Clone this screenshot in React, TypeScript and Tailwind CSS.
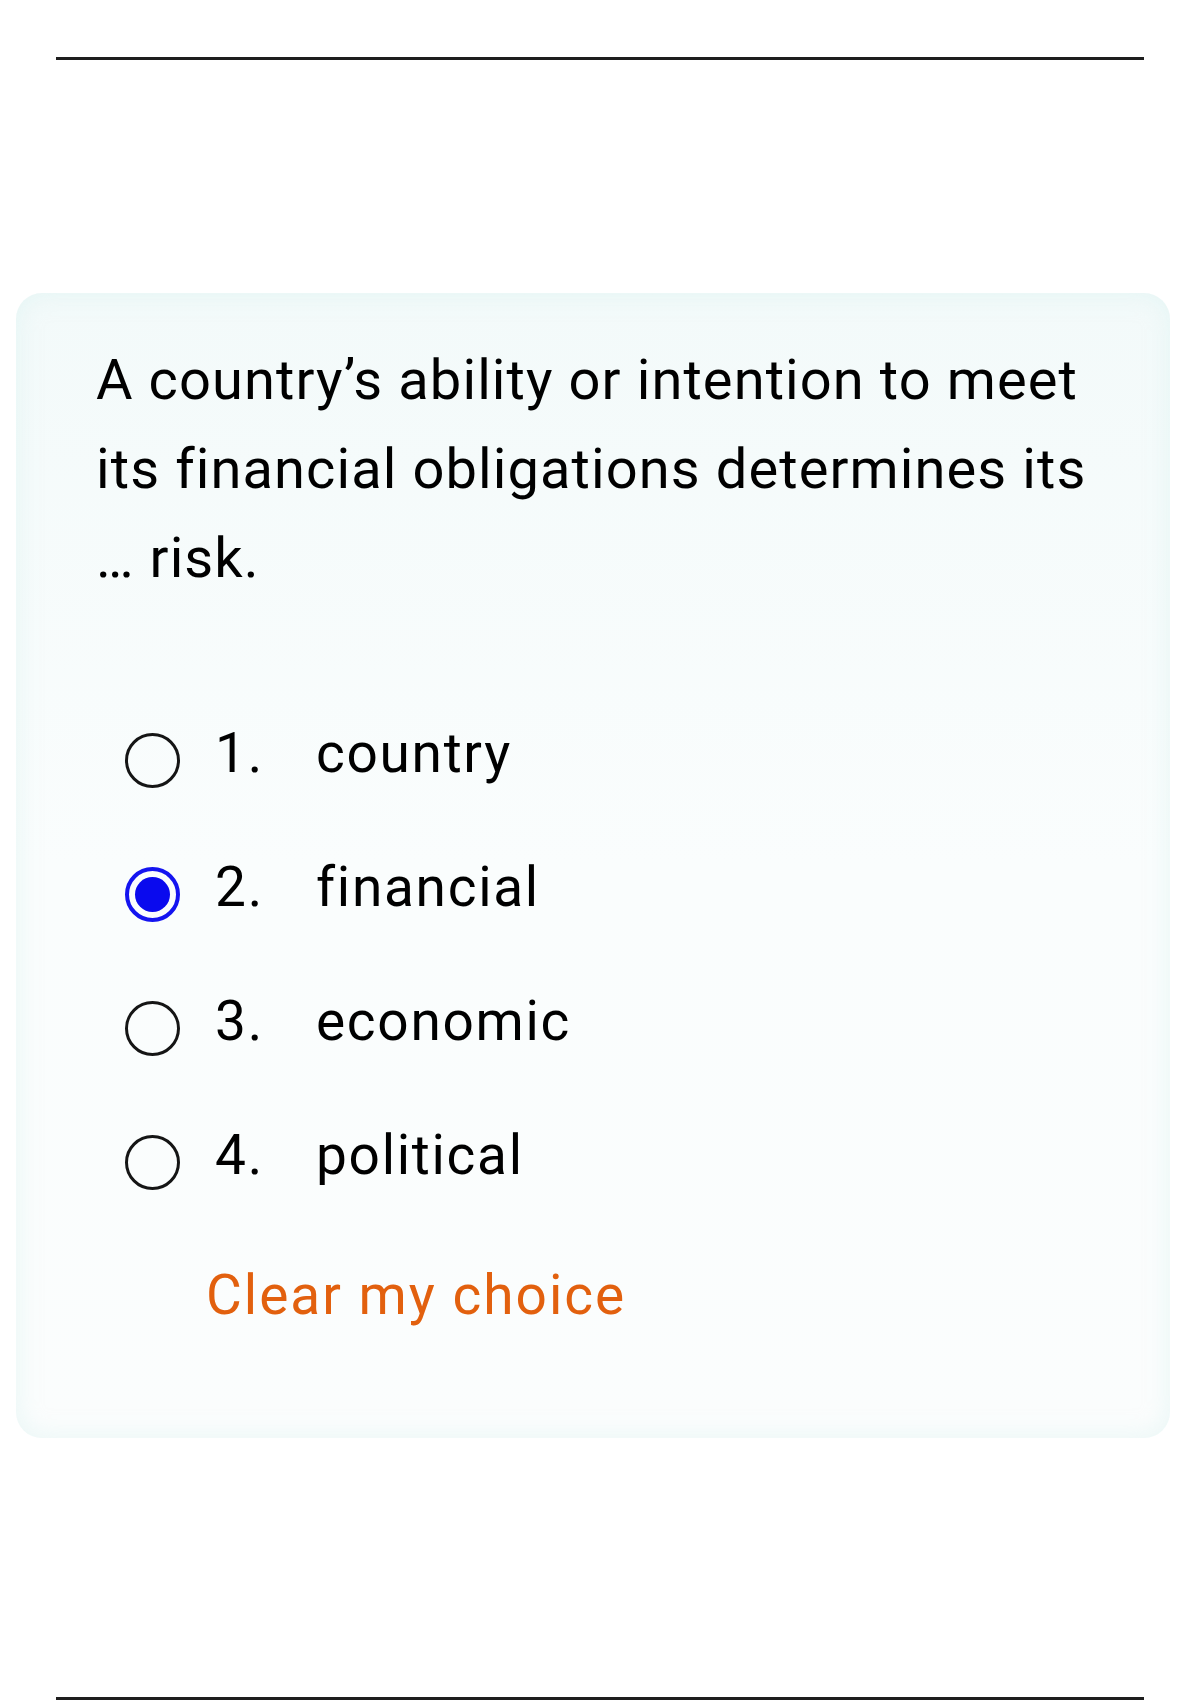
import React, { useState } from 'react';

const options = ['country', 'financial', 'economic', 'political'];

const Radio = ({ checked }: { checked: boolean }) =>
  checked ? (
    <span className="mt-[14px] flex h-[55px] w-[55px] shrink-0 items-center justify-center rounded-full border-[4px] border-[#1414f0]">
      <span className="h-[35px] w-[35px] rounded-full bg-[#0a0aee]" />
    </span>
  ) : (
    <span className="mt-[14px] block h-[55px] w-[55px] shrink-0 rounded-full border-[3px] border-[#151515]" />
  );

export default function App() {
  const [selected, setSelected] = useState<number | null>(1);

  return (
    <div className="flex min-h-[1700px] w-[1200px] flex-col bg-white font-['Roboto',sans-serif] text-black">
      <div className="mx-[56px] mt-[57px] h-[3px] bg-[#1e1e1e]" />

      <div className="ml-[16px] mr-[30px] mt-[233px] rounded-[26px] bg-gradient-to-b from-[#f3fafa] via-[#fafdfd] to-[#fbfdfd] pb-[103px] pl-[80px] pr-[20px] pt-[43px] shadow-[inset_0_0_24px_rgba(214,242,240,0.5)]">
        <p className="whitespace-nowrap text-[56px] leading-[89px] tracking-[1.1px]">
          A country’s ability or intention to meet
          <br />
          its financial obligations determines its
          <br />
          … risk.
        </p>

        <div className="mt-[83px] pl-[29px]">
          {options.map((o, i) => (
            <label
              key={o}
              onClick={() => setSelected(i)}
              className="flex h-[134px] cursor-pointer items-center text-[55px] leading-[134px] tracking-[1.7px]"
            >
              <Radio checked={selected === i} />
              <span className="ml-[35px] w-[101px] shrink-0">{i + 1}.</span>
              <span>{o}</span>
            </label>
          ))}
        </div>

        <button
          onClick={() => setSelected(null)}
          className="ml-[110px] mt-[33px] block text-[55px] leading-[80px] tracking-[2px] text-[#e2600e]"
        >
          Clear my choice
        </button>
      </div>

      <div className="mx-[56px] mt-[259px] h-[3px] bg-[#1e1e1e]" />
    </div>
  );
}
